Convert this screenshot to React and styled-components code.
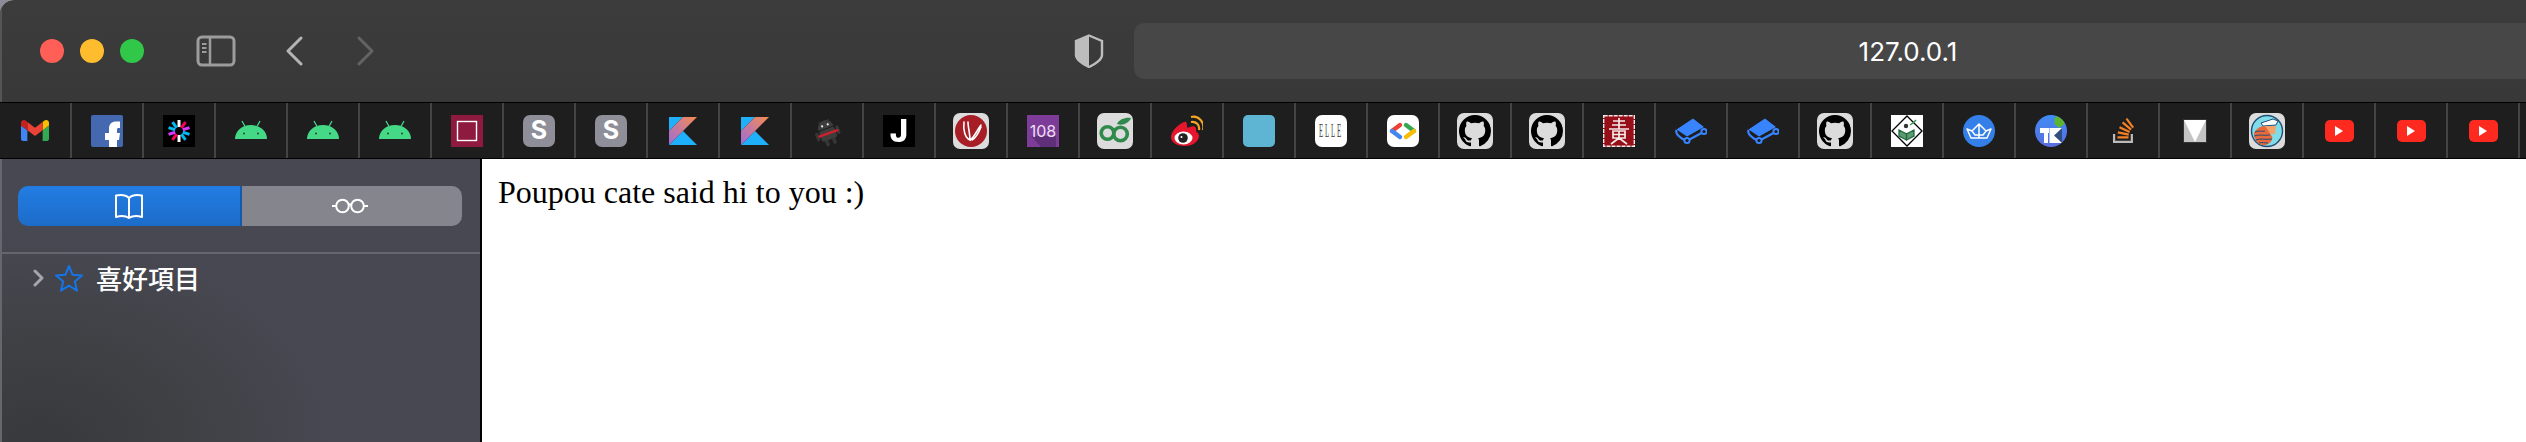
import React from "react";
import styled, { createGlobalStyle } from "styled-components";

const Global = createGlobalStyle`
  html, body {
    margin: 0;
    height: 442px;
    overflow: hidden;
    background: #8c8c98;
  }
`;

const Window = styled.div`
  width: 2526px;
  height: 442px;
  overflow: hidden;
  border-top-left-radius: 14px;
  display: flex;
  flex-direction: column;
  background: #fff;
`;

const TitleBar = styled.header`
  height: 102px;
  flex-shrink: 0;
  display: flex;
  align-items: center;
  padding-left: 40px;
  overflow: hidden;
  background: linear-gradient(#3c3c3c, #383838);
  box-shadow: inset 2px 0 0 #555;
`;

const Dot = styled.span`
  width: 24px;
  height: 24px;
  border-radius: 50%;
  flex-shrink: 0;
  margin-right: 16px;
  background: ${(p) => p.$color};
`;

const ToolIcon = styled.svg`
  flex-shrink: 0;
  display: block;
  margin-left: ${(p) => p.$left}px;
`;

const UrlBar = styled.div`
  width: 1548px;
  height: 56px;
  flex-shrink: 0;
  margin-left: 30px;
  border-radius: 10px;
  background: #474747;
  display: flex;
  align-items: center;
  justify-content: center;
  color: #fff;
  font-family: Inter, "Liberation Sans", sans-serif;
  font-size: 26px;
`;

const BookmarkBar = styled.nav`
  height: 55px;
  flex-shrink: 0;
  display: flex;
  overflow: hidden;
  background: #1e1e1e;
  border-top: 1px solid #000;
  border-bottom: 1px solid #000;
`;

const Cell = styled.a`
  width: 72px;
  flex-shrink: 0;
  box-sizing: border-box;
  border-right: 2px solid #444;
  display: flex;
  align-items: center;
  justify-content: center;
`;

const Tile = styled.span`
  width: ${(p) => p.$w || p.$size || 32}px;
  height: ${(p) => p.$h || p.$size || 32}px;
  border-radius: ${(p) => p.$radius || 0}px;
  background: ${(p) => p.$bg || "transparent"};
  overflow: hidden;
  display: flex;
  align-items: center;
  justify-content: center;
  & svg {
    display: block;
  }
`;

const Main = styled.div`
  flex: 1;
  display: flex;
  min-height: 0;
`;

const Sidebar = styled.aside`
  width: 482px;
  flex-shrink: 0;
  box-sizing: border-box;
  border-right: 2px solid #000;
  background:
    radial-gradient(ellipse 300px 210px at 40px 100%, #38393c 0%, #3f4044 45%, rgba(72, 72, 82, 0) 100%),
    #484852;
  box-shadow: inset 2px 0 0 #66666c;
`;

const Controls = styled.div`
  padding: 27px 18px 26px;
  border-bottom: 2px solid #65656d;
`;

const Segmented = styled.div`
  height: 40px;
  display: flex;
  border-radius: 10px;
  overflow: hidden;
`;

const Segment = styled.div`
  flex: ${(p) => (p.$active ? "0 0 224px" : "1")};
  box-sizing: border-box;
  display: flex;
  align-items: center;
  justify-content: center;
  padding-right: ${(p) => (p.$active ? 0 : 4)}px;
  background: ${(p) => (p.$active ? "linear-gradient(#227de3, #1d6cc9)" : "#85858e")};
  border-right: ${(p) => (p.$active ? "2px solid #1659aa" : "none")};
`;

const FavRow = styled.div`
  display: flex;
  align-items: center;
  height: 40px;
  margin-top: 4px;
  padding-left: 33px;
  color: #fff;
  font-family: "Noto Sans CJK TC", "Noto Sans CJK SC", sans-serif;
  font-size: 26px;
  font-weight: 500;
`;

const StarIcon = styled.svg`
  margin-left: 10px;
`;

const FavLabel = styled.span`
  margin-left: 12px;
  line-height: 1;
`;

const Content = styled.main`
  flex: 1;
  padding: 15px 16px;
  background: #fff;
  color: #000;
  font-family: "Liberation Serif", serif;
  font-size: 32px;
  line-height: 37px;
`;

const Svg = ({ s = 32, w, h, box, children }) => (
  <svg width={w || s} height={h || s} viewBox={box || `0 0 ${s} ${s}`}>{children}</svg>
);

const Gmail = () => (
  <Svg w={28} h={21} box="52 42 88 66">
    <path fill="#4285f4" d="M58 108h14V74L52 59v43c0 3.32 2.69 6 6 6" />
    <path fill="#34a853" d="M120 108h14c3.32 0 6-2.69 6-6V59l-20 15" />
    <path fill="#fbbc04" d="M120 48v26l20-15v-8c0-7.42-8.47-11.65-14.4-7.2" />
    <path fill="#ea4335" d="M72 74V48l24 18 24-18v26L96 92" />
    <path fill="#c5221f" d="M52 51v8l20 15V48l-5.6-4.2c-5.94-4.45-14.4-.22-14.4 7.2" />
  </Svg>
);

const Facebook = () => (
  <Tile $bg="#4569b0" $radius={2}>
    <Svg>
      <path fill="#fff" d="M18 32V25H14V18H18V13.5C18 9 21 6.5 25 6.5H29V13H27.5C26.5 13 26 13.5 26 15V18H29L28 25H26V32Z" />
    </Svg>
  </Tile>
);

const jwtColors = ["#fff", "#fb015b", "#d63aff", "#00b9f1", "#00b9f1", "#fff", "#fb015b", "#d63aff", "#00b9f1", "#00b9f1"];
const Jwt = () => (
  <Tile $bg="#000">
    <Svg>
      {jwtColors.map((c, i) => (
        <line key={i} x1="16" y1="5" x2="16" y2="12" stroke={c} strokeWidth="3" transform={`rotate(${i * 36} 16 16)`} />
      ))}
    </Svg>
  </Tile>
);

const Android = () => (
  <Svg>
    <path fill="#45d886" d="M0 24C0 16 7 10 16 10S32 16 32 24Z" />
    <path stroke="#45d886" strokeWidth="1.3" fill="none" d="M7 6L10 11.5M25 6L22 11.5" />
    <circle cx="9" cy="18.5" r=".9" fill="#1e3a2a" />
    <circle cx="23" cy="18.5" r=".9" fill="#1e3a2a" />
  </Svg>
);

const Crimson = () => (
  <Tile $bg="#8e1a3f">
    <Svg>
      <rect x="6.5" y="6.5" width="19" height="19" fill="none" stroke="#fff" strokeWidth="1.4" />
    </Svg>
  </Tile>
);

const Letter = styled.span`
  display: block;
  color: ${(p) => p.$color || "#fff"};
  font-family: Inter, sans-serif;
  font-size: ${(p) => p.$size}px;
  font-weight: ${(p) => p.$weight || 700};
  line-height: 1;
  filter: ${(p) => (p.$soft ? "blur(0.5px)" : "none")};
`;

const Scode = () => (
  <Tile $bg="#8f8f9a" $radius={7}>
    <Letter $size={25}>S</Letter>
  </Tile>
);

const Kotlin = () => (
  <Svg s={28}>
    <defs>
      <linearGradient id="kot" x1="0" y1="1" x2="1" y2="0">
        <stop offset="0" stopColor="#9d6cdb" />
        <stop offset="1" stopColor="#f68b4f" />
      </linearGradient>
    </defs>
    <path fill="#1eb0fb" d="M0 28L14 14L28 28Z" />
    <path fill="#1eb0fb" d="M0 0H14L0 14Z" />
    <path fill="url(#kot)" d="M14 0H28L14 14L0 28V14Z" />
  </Svg>
);

const Ninja = () => (
  <Svg>
    <g transform="rotate(-20 16 16)">
      <path fill="#3d3d3d" d="M8 13C8 8 12 5 16 5S24 8 24 13Z" />
      <path stroke="#3d3d3d" strokeWidth="1" d="M11 5L12.5 7M21 5L19.5 7" />
      <rect x="8" y="14" width="16" height="11" rx="2" fill="#3d3d3d" />
      <rect x="3.5" y="14" width="3.4" height="9" rx="1.7" fill="#363636" />
      <rect x="25" y="14" width="3.4" height="9" rx="1.7" fill="#363636" />
      <rect x="10.5" y="24" width="3.6" height="7" rx="1.8" fill="#363636" />
      <rect x="17.9" y="24" width="3.6" height="7" rx="1.8" fill="#363636" />
      <rect x="6" y="17.5" width="21" height="2.4" fill="#d0202c" />
      <circle cx="13" cy="10" r="1.1" fill="#eee" />
      <circle cx="19" cy="10" r="1.1" fill="#eee" />
    </g>
  </Svg>
);

const Jicon = () => (
  <Tile $bg="#000">
    <Letter $size={31} $weight={800} $soft>J</Letter>
  </Tile>
);

const Wolfram = () => (
  <Tile $bg="#dcdcdc" $size={36} $radius={7}>
    <Svg s={36}>
      <circle cx="18" cy="18" r="16" fill="#a81e27" />
      <path fill="none" stroke="#fff" strokeWidth="1.6" strokeLinecap="round" d="M11 9C10 17 12 25 17 27C17 21 15 14 15 9M17 27C21 25 24 17 28 12M19 27C23 25 26 19 28 14" />
    </Svg>
  </Tile>
);

const Purple108 = () => (
  <Svg>
    <rect width="32" height="32" fill="#7d3c98" />
    <path fill="#5f2f7a" d="M4 21H29V32H14Z" />
    <text x="16" y="21.5" textAnchor="middle" fontFamily="Inter, sans-serif" fontSize="16" fill="#eadff0">108</text>
  </Svg>
);

const GreenRings = () => (
  <Tile $bg="#dcdcdc" $size={36} $radius={7}>
    <Svg s={36}>
      <circle cx="10.5" cy="20" r="6.3" fill="none" stroke="#2f8a4c" strokeWidth="3.6" />
      <circle cx="23.5" cy="21" r="6.8" fill="none" stroke="#2f8a4c" strokeWidth="3.6" />
      <path fill="#2f8a4c" d="M20 11C22 6 29 4 34 5C32 10 26 13 20 11Z" />
    </Svg>
  </Tile>
);

const Weibo = () => (
  <Svg>
    <path fill="#e6162d" d="M13 7C6 10 0 17 0 22C0 28 7 31 14 31C22 31 28 26 28 21C28 18 25 17 25 16C26 12 23 10 19 12C16 13 16 13 16 11C16 7 15 6 13 7Z" />
    <ellipse cx="12.5" cy="23" rx="9" ry="6.5" fill="#fff" />
    <circle cx="12" cy="23" r="4.8" fill="#222" />
    <circle cx="10.5" cy="22" r="1" fill="#fff" />
    <path fill="none" stroke="#f5a623" strokeWidth="2.2" d="M20 7C25 6 29 10 28 15M20 2C28 0 34 8 32 15" />
  </Svg>
);

const Elle = () => (
  <Tile $bg="#fff" $radius={7}>
    <Svg>
      <text x="4" y="22" fontFamily="Liberation Serif, serif" fontSize="18" letterSpacing="5" fill="#444" textLength="24" lengthAdjust="spacingAndGlyphs">ELLE</text>
    </Svg>
  </Tile>
);

const GDev = () => (
  <Tile $bg="#fff" $radius={7}>
    <Svg>
      <g fill="none" strokeWidth="4.4" strokeLinecap="round">
        <path stroke="#ea4335" d="M13 10L5 16" />
        <path stroke="#4285f4" d="M5 16L13 22" />
        <path stroke="#34a853" d="M19 10L27 16" />
        <path stroke="#fbbc04" d="M27 16L19 22" />
      </g>
    </Svg>
  </Tile>
);

const GitHub = () => (
  <Tile $bg="#dcdcdc" $size={36} $radius={7}>
    <svg width="32" height="32" viewBox="0 0 16 16">
      <path fill="#000" d="M8 0C3.58 0 0 3.58 0 8c0 3.54 2.29 6.53 5.47 7.59.4.07.55-.17.55-.38 0-.19-.01-.82-.01-1.49-2.01.37-2.53-.49-2.69-.94-.09-.23-.48-.94-.82-1.13-.28-.15-.68-.52-.01-.53.63-.01 1.08.58 1.23.82.72 1.21 1.87.87 2.33.66.07-.52.28-.87.51-1.07-1.78-.2-3.64-.89-3.64-3.95 0-.87.31-1.59.82-2.15-.08-.2-.36-1.02.08-2.12 0 0 .67-.21 2.2.82.64-.18 1.32-.27 2-.27.68 0 1.36.09 2 .27 1.53-1.04 2.2-.82 2.2-.82.44 1.1.16 1.92.08 2.12.51.56.82 1.27.82 2.15 0 3.07-1.87 3.75-3.65 3.95.29.25.54.73.54 1.48 0 1.07-.01 1.93-.01 2.2 0 .21.15.46.55.38A8.013 8.013 0 0016 8c0-4.42-3.58-8-8-8z" />
    </svg>
  </Tile>
);

const Seal = () => (
  <Tile $bg="#960f18">
    <Svg>
      <rect x=".7" y=".7" width="30.6" height="30.6" fill="none" stroke="#f2e6e6" strokeWidth="1.4" strokeDasharray="4 1" />
      <path fill="none" stroke="#f6e9e9" strokeWidth="1.7" d="M16 3V14M10 6H22M9 10H23M6 14H26M10 16H22V23H10ZM16 16V23M10 19.5H22M16 23L8 29M16 23L24 29" />
    </Svg>
  </Tile>
);

const GitBook = () => (
  <Svg>
    <path fill="#3884ff" d="M18 3.5L29 12L12 21.5L1.5 14.5Z" />
    <path fill="none" stroke="#3884ff" strokeWidth="2.2" d="M1.5 15C0 19 4 22 9.5 25M14.5 24.5L26.5 18" />
    <circle cx="12" cy="25.5" r="2.6" fill="none" stroke="#3884ff" strokeWidth="2" />
    <circle cx="29" cy="16.5" r="2.6" fill="none" stroke="#3884ff" strokeWidth="2" />
  </Svg>
);

const Diamond = () => (
  <Tile $bg="#fff">
    <Svg>
      <path fill="none" stroke="#000" strokeWidth="1.3" d="M16 1L31 16L16 31L1 16Z" />
      <circle cx="15" cy="11" r="2.2" fill="#333" />
      <path fill="#5d9a72" stroke="#1f6a3c" strokeWidth="1.3" d="M8 15L15.5 19V25L8 21ZM23 15L15.5 19V25L23 21Z" />
      <path fill="none" stroke="#2d9a4a" strokeWidth="1.4" d="M19 10L22 8L25 5" />
    </Svg>
  </Tile>
);

const Boat = () => (
  <Tile $bg="#3580e8" $radius={16}>
    <Svg>
      <path fill="none" stroke="#fff" strokeWidth="1.5" strokeLinejoin="round" d="M4 14L9 16L16 9L23 16L28 14L24 23H8ZM16 9V23M9 16L12 20H20L23 16" />
    </Svg>
  </Tile>
);

const TkIcon = () => (
  <Tile $bg="linear-gradient(#3f8cf5, #5a6ee0)" $radius={16}>
    <Svg>
      <path fill="#fff" d="M5 13H14V18H13V28H9V18H5Z" />
      <path fill="#fff" d="M14.5 13H27V28H14.5Z" />
      <path fill="#2f4f7f" d="M19 20.5L27 13V28Z" />
      <path fill="#5cb531" d="M24 0L29.5 3V9L24 13L19.5 9V3Z" />
    </Svg>
  </Tile>
);

const Stack = () => (
  <svg width="25" height="25" viewBox="0 0 24 24">
    <path fill="#bcbbbb" d="M1.89 15.47V24h19.19v-8.53h-2.133v6.397H4.021v-6.396H1.89z" />
    <path fill="#f48024" d="M15.725 0l-1.72 1.277 6.39 8.588 1.716-1.277L15.725 0zm-3.94 3.418l-1.369 1.644 8.225 6.85 1.369-1.644-8.225-6.85zm-3.15 4.465l-.905 1.94 9.702 4.517.904-1.94-9.701-4.517zm-1.85 4.86l-.44 2.093 10.473 2.201.44-2.092-10.473-2.203zM6.154 17.603v2.13h10.66v-2.13H6.154z" />
  </svg>
);

const GreyV = () => (
  <svg width="24" height="24" viewBox="0 0 24 24">
    <rect x=".5" y=".5" width="23" height="23" fill="#c4c4c4" stroke="#333" />
    <path fill="#fff" d="M1 1H23L12 23Z" />
  </svg>
);

const Sailor = () => (
  <Tile $bg="#dcdcdc" $size={36} $radius={7}>
    <Svg s={36}>
      <circle cx="18" cy="18" r="15.5" fill="#7fdce8" stroke="#1e4e78" strokeWidth="1.4" />
      <path fill="#fff" stroke="#1e4e78" d="M12 10L24 6L29 8L27 12L14 13Z" />
      <path fill="#f2a36a" d="M16 13H27L26 21H18Z" />
      <path fill="#e8693c" d="M5 20C8 14 14 12 17 14L22 22C25 24 23 30 17 32C10 33 5 28 5 20Z" />
      <path fill="none" stroke="#1e4e78" strokeWidth="1" d="M6 19C10 17 13 19 16 18M5 23C10 21 14 23 21 22M7 27C11 25 16 27 23 26M10 30C13 29 16 30 19 30" />
    </Svg>
  </Tile>
);

const YouTube = () => (
  <Tile $w={29} $h={22} $bg="#ff2a1f" $radius={5}>
    <svg width="10" height="12" viewBox="0 0 10 12">
      <path fill="#fff" d="M1 1L9 6L1 11Z" />
    </svg>
  </Tile>
);

const BlueSquare = () => <Tile $bg="#5eb5d3" $radius={5} />;

const bookmarks = [
  Gmail, Facebook, Jwt, Android, Android, Android, Crimson, Scode, Scode, Kotlin, Kotlin, Ninja,
  Jicon, Wolfram, Purple108, GreenRings, Weibo, BlueSquare, Elle, GDev, GitHub, GitHub, Seal,
  GitBook, GitBook, GitHub, Diamond, Boat, TkIcon, Stack, GreyV, Sailor, YouTube, YouTube, YouTube,
];

export default function App() {
  return (
    <Window>
      <Global />
      <TitleBar>
        <Dot $color="#ff5f57" />
        <Dot $color="#febc2e" />
        <Dot $color="#31c748" />
        <ToolIcon $left={36} width="40" height="32" viewBox="0 0 40 32">
          <rect x="2" y="2" width="36" height="28" rx="4" fill="none" stroke="#9c9c9c" strokeWidth="3" />
          <path d="M14 2V30" stroke="#9c9c9c" strokeWidth="2.5" />
          <path d="M6 9H10.5M6 13H10.5M6 17H10.5" stroke="#9c9c9c" strokeWidth="1.8" />
        </ToolIcon>
        <ToolIcon $left={49} width="18" height="30" viewBox="0 0 18 30">
          <path d="M16 2L3 15L16 28" fill="none" stroke="#b4b4b4" strokeWidth="3" strokeLinecap="round" strokeLinejoin="round" />
        </ToolIcon>
        <ToolIcon $left={54} width="18" height="30" viewBox="0 0 18 30">
          <path d="M2 2L15 15L2 28" fill="none" stroke="#636363" strokeWidth="3" strokeLinecap="round" strokeLinejoin="round" />
        </ToolIcon>
        <ToolIcon $left={699} width="30" height="34" viewBox="0 0 30 34">
          <path d="M15 1.5L28 7V21C28 25 22 30 15 33C8 30 2 25 2 21V7Z" fill="none" stroke="#bdbdbd" strokeWidth="2.4" />
          <path d="M15 1.5V33C8 30 2 25 2 21V7Z" fill="#bdbdbd" />
        </ToolIcon>
        <UrlBar>127.0.0.1</UrlBar>
      </TitleBar>
      <BookmarkBar>
        {bookmarks.map((Icon, i) => (
          <Cell key={i}>
            <Icon />
          </Cell>
        ))}
        <Cell />
      </BookmarkBar>
      <Main>
        <Sidebar>
          <Controls>
            <Segmented>
              <Segment $active>
                <svg width="30" height="26" viewBox="0 0 30 26">
                  <path d="M15 5C12 2 7 1.5 2 2.5V24C7 22.5 12 23 15 25C18 23 23 22.5 28 24V2.5C23 1.5 18 2 15 5ZM15 5V25" fill="none" stroke="#fff" strokeWidth="2" strokeLinejoin="round" />
                </svg>
              </Segment>
              <Segment>
                <svg width="38" height="16" viewBox="0 0 38 16">
                  <circle cx="11.5" cy="8" r="6.3" fill="none" stroke="#fff" strokeWidth="2" />
                  <circle cx="26.5" cy="8" r="6.3" fill="none" stroke="#fff" strokeWidth="2" />
                  <path d="M17.5 7C18.5 6 19.5 6 20.5 7M5 8H1M33 8H37" fill="none" stroke="#fff" strokeWidth="2" />
                </svg>
              </Segment>
            </Segmented>
          </Controls>
          <FavRow>
            <svg width="11" height="18" viewBox="0 0 11 18">
              <path d="M2 2L9 9L2 16" fill="none" stroke="#a5a5ad" strokeWidth="3" strokeLinecap="round" strokeLinejoin="round" />
            </svg>
            <StarIcon width="30" height="28" viewBox="0 0 30 28">
              <path d="M15 2L18.6 10.8L28 11.5L20.8 17.5L23 26.7L15 21.7L7 26.7L9.2 17.5L2 11.5L11.4 10.8Z" fill="none" stroke="#1475e6" strokeWidth="2" strokeLinejoin="round" />
            </StarIcon>
            <FavLabel>喜好項目</FavLabel>
          </FavRow>
        </Sidebar>
        <Content>Poupou cate said hi to you :)</Content>
      </Main>
    </Window>
  );
}
